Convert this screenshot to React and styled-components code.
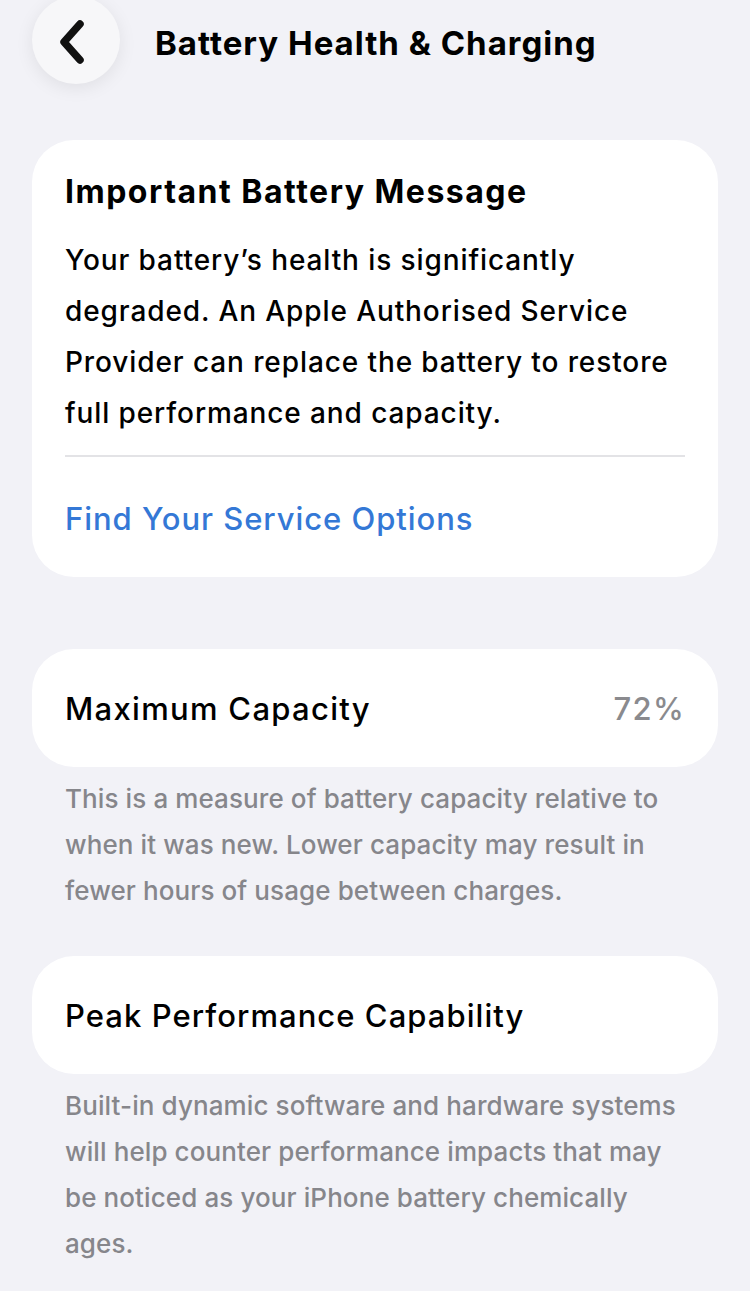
import styled, { createGlobalStyle } from 'styled-components';

const GlobalStyle = createGlobalStyle`
  html, body {
    margin: 0;
    padding: 0;
    background: #f2f2f7;
  }
  body {
    font-family: Inter, "Noto Sans", "Liberation Sans", sans-serif;
    -webkit-font-smoothing: antialiased;
  }
`;

const Screen = styled.div`
  width: 750px;
  min-height: 1291px;
  background: #f2f2f7;
  overflow: hidden;
`;

const Header = styled.div`
  display: flex;
  align-items: center;
  gap: 35px;
  padding: 0 0 0 32px;
  height: 88px;
  margin-top: -4px;
`;

const BackButton = styled.button`
  width: 88px;
  height: 88px;
  border: none;
  border-radius: 50%;
  background: #f7f7f9;
  box-shadow: 0 4px 18px rgba(0, 0, 0, 0.08);
  display: flex;
  align-items: center;
  justify-content: center;
  padding: 4px 6px 0 0;
  flex-shrink: 0;
`;

const Title = styled.h1`
  margin: 6px 0 0 0;
  font-size: 33px;
  font-weight: 700;
  color: #000;
  letter-spacing: 1px;
`;

const Content = styled.div`
  display: flex;
  flex-direction: column;
  padding: 56px 32px 0 32px;
`;

const Card = styled.div`
  background: #fff;
  border-radius: 42px;
  padding: ${p => p.$pad || '0 33px'};
  margin-top: ${p => p.$top || '0'};
`;

const CardTitle = styled.h2`
  margin: 0;
  font-size: 32px;
  font-weight: 700;
  line-height: 40px;
  color: #000;
  letter-spacing: 1.5px;
`;

const Body = styled.p`
  margin: 23px 0 0 0;
  font-size: 28px;
  font-weight: 500;
  line-height: 51px;
  color: #000;
  letter-spacing: 0.9px;
  white-space: nowrap;
`;

const Divider = styled.div`
  height: 2px;
  background: #e3e3e6;
  margin: 16px 0 0 0;
`;

const Link = styled.a`
  display: block;
  font-size: 31px;
  font-weight: 500;
  line-height: 40px;
  color: #3478d6;
  margin: 42px 0 0 0;
  letter-spacing: 0.95px;
`;

const Row = styled.div`
  height: 118px;
  display: flex;
  align-items: center;
  justify-content: space-between;
`;

const RowLabel = styled.span`
  font-size: 31px;
  font-weight: 500;
  color: #000;
  letter-spacing: ${p => p.$ls || '1.3px'};
`;

const RowValue = styled.span`
  font-size: 31px;
  font-weight: 500;
  color: #8a8a8e;
  letter-spacing: 1.3px;
`;

const Footnote = styled.p`
  margin: 9px 0 0 0;
  padding: 0 0 0 33px;
  font-size: 26px;
  font-weight: 500;
  line-height: 46px;
  color: #86868b;
  letter-spacing: 0.1px;
  white-space: nowrap;
`;

function Chevron() {
  return (
    <svg width="34" height="46" viewBox="0 0 34 46">
      <path d="M24 5 L8 23 L24 41" fill="none" stroke="#111" strokeWidth="7.5" strokeLinecap="round" strokeLinejoin="round" />
    </svg>
  );
}

function App() {
  return (
    <Screen>
      <GlobalStyle />
      <Header>
        <BackButton aria-label="Back">
          <Chevron />
        </BackButton>
        <Title>Battery Health &amp; Charging</Title>
      </Header>
      <Content>
        <Card $pad="32px 33px 38px 33px">
          <CardTitle>Important Battery Message</CardTitle>
          <Body>
            Your battery’s health is significantly<br />
            degraded. An Apple Authorised Service<br />
            Provider can replace the battery to restore<br />
            full performance and capacity.
          </Body>
          <Divider />
          <Link>Find Your Service Options</Link>
        </Card>
        <Card $top="72px">
          <Row>
            <RowLabel>Maximum Capacity</RowLabel>
            <RowValue>72%</RowValue>
          </Row>
        </Card>
        <Footnote>
          This is a measure of battery capacity relative to<br />
          when it was new. Lower capacity may result in<br />
          fewer hours of usage between charges.
        </Footnote>
        <Card $top="42px">
          <Row>
            <RowLabel $ls="1.05px">Peak Performance Capability</RowLabel>
          </Row>
        </Card>
        <Footnote>
          Built-in dynamic software and hardware systems<br />
          will help counter performance impacts that may<br />
          be noticed as your iPhone battery chemically<br />
          ages.
        </Footnote>
      </Content>
    </Screen>
  );
}

export default App;
